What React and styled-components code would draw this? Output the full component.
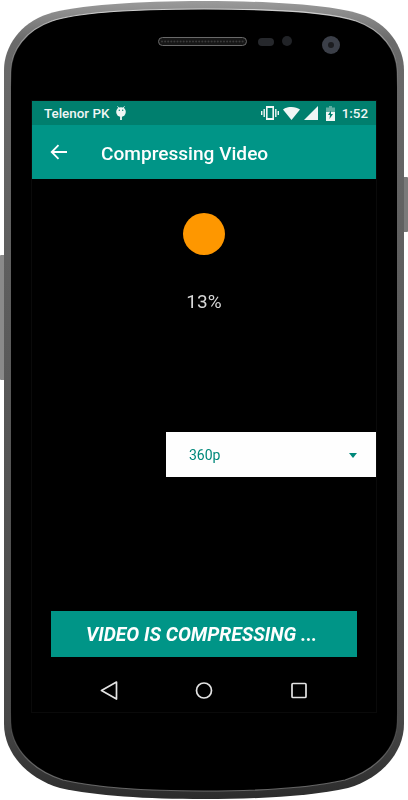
import React from "react";
import styled, { createGlobalStyle } from "styled-components";

const GlobalStyle = createGlobalStyle`
  html, body {
    margin: 0;
    padding: 0;
    background: #fff;
    font-family: Roboto, "Liberation Sans", sans-serif;
  }
`;

const Device = styled.div`
  position: relative;
  box-sizing: border-box;
  width: 408px;
  height: 800px;
  padding: 101px 32px 88px;
  overflow: hidden;
`;

const Shell = styled.svg`
  position: absolute;
  left: 0;
  top: 0;
`;

const Screen = styled.div`
  position: relative;
  display: flex;
  flex-direction: column;
  box-sizing: border-box;
  height: 611px;
  background: #000;
  box-shadow: 0 0 0 1px #0b0b0b;
  opacity: 0.999;
`;

const StatusBar = styled.div`
  display: flex;
  align-items: center;
  justify-content: space-between;
  height: 24px;
  padding: 0 8px 0 12px;
  background: #00806f;
  color: #f1f7f6;
  font-size: 13.4px;
  font-weight: 500;
`;

const StatusGroup = styled.div`
  display: flex;
  align-items: center;
  gap: ${(props) => props.$gap}px;
`;

const BatterySlot = styled.span`
  display: flex;
  margin: 0 3px 0 4px;
`;

const AppBar = styled.div`
  display: flex;
  align-items: center;
  height: 54px;
  padding-left: 18px;
  background: #009688;
  color: #fff;
`;

const Title = styled.h1`
  margin: 2px 0 0 33px;
  font-size: 19.1px;
  font-weight: 500;
`;

const Content = styled.div`
  display: flex;
  flex: 1;
  flex-direction: column;
  align-items: center;
  padding-top: 34px;
`;

const Dot = styled.div`
  width: 42px;
  height: 42px;
  border-radius: 50%;
  background: #ff9800;
`;

const Percent = styled.div`
  margin-top: 36px;
  color: #d8d8d8;
  font-size: 19px;
  line-height: 22px;
`;

const Dropdown = styled.div`
  display: flex;
  align-items: center;
  justify-content: space-between;
  align-self: flex-end;
  box-sizing: border-box;
  width: 210.5px;
  height: 45px;
  margin-top: 119px;
  padding: 0 19px 0 23.5px;
  background: #fff;
  color: #00897b;
  font-size: 14px;
`;

const Caret = styled.div`
  width: 0;
  height: 0;
  margin-top: 2px;
  border-left: 4.5px solid transparent;
  border-right: 4.5px solid transparent;
  border-top: 5px solid #00897b;
`;

const ActionButton = styled.button`
  display: block;
  box-sizing: border-box;
  width: 306px;
  height: 46px;
  margin-top: auto;
  padding: 0 0 0 35px;
  border: 0;
  background: #009688;
  color: #fff;
  font-family: inherit;
  font-size: 19.3px;
  font-style: italic;
  font-weight: 700;
  text-align: left;
`;

const NavBar = styled.div`
  display: flex;
  align-items: center;
  justify-content: center;
  gap: 75px;
  box-sizing: border-box;
  height: 55px;
  padding-top: 11px;
`;

const NavIcon = styled.svg`
  display: block;
  width: 20px;
  height: 20px;
`;

function DeviceShell() {
  const outer =
    "M204 1C270 1 332 5 360 14C388 23 404 47 404 70L404 724C404 752 382 778 348 788C312 796 262 799 204 799C146 799 96 796 60 788C26 778 4 752 4 724L4 70C4 47 20 23 48 14C76 5 138 1 204 1Z";
  const inner =
    "M204 9C270 9 330 12 356 21C382 30 397 50 397 72L397 722C397 748 376 770 345 780C310 788 262 791 204 791C146 791 98 788 63 780C32 770 11 748 11 722L11 72C11 50 26 30 52 21C78 12 138 9 204 9Z";
  const slots = Array.from({ length: 27 }, (_, i) => 162 + i * 3.1);

  return (
    <Shell width="408" height="800" viewBox="0 0 408 800">
      <defs>
        <linearGradient id="band" x1="0" y1="0" x2="0" y2="1">
          <stop offset="0" stopColor="#9a9a9a" />
          <stop offset="0.05" stopColor="#6a6a6a" />
          <stop offset="0.5" stopColor="#585858" />
          <stop offset="0.9" stopColor="#484848" />
          <stop offset="1" stopColor="#2c2c2c" />
        </linearGradient>
        <linearGradient id="ridge" x1="0" y1="0" x2="0" y2="1">
          <stop offset="0" stopColor="#e0e0e0" stopOpacity="0.9" />
          <stop offset="0.1" stopColor="#e0e0e0" stopOpacity="0" />
          <stop offset="0.9" stopColor="#9a9a9a" stopOpacity="0" />
          <stop offset="0.97" stopColor="#9a9a9a" stopOpacity="0.6" />
        </linearGradient>
      </defs>
      <rect x="0" y="255" width="6" height="125" rx="1" fill="#8a8a8a" />
      <rect x="402" y="177" width="6" height="55" rx="1" fill="#7a7a7a" />
      <path d={outer} fill="url(#band)" />
      <path d={inner} fill="#000" stroke="url(#ridge)" strokeWidth="1.2" />
      <rect x="158.5" y="37.5" width="88" height="8" rx="4" fill="#161616" stroke="#6a6a6a" />
      {slots.map((x) => (
        <circle key={x} cx={x} cy="41.5" r="1" fill="#3c3c3c" />
      ))}
      <rect x="258" y="38" width="16" height="8" rx="4" fill="#26282c" />
      <circle cx="287" cy="41" r="5" fill="#212327" />
      <circle cx="331" cy="45" r="9" fill="#3b3f48" />
      <circle cx="331" cy="45" r="3" fill="#1c1d20" />
    </Shell>
  );
}

function AndroidIcon() {
  return (
    <svg width="10" height="14" viewBox="0 0 10 14" fill="#f1f7f6">
      <path d="M1.500 .3l1.500 2M8.500 .3L7 2.300" stroke="#f1f7f6" strokeWidth=".9" />
      <circle cx="5" cy="6" r="4.800" />
      <rect x="4.100" y="10" width="1.800" height="4" />
      <circle cx="3.300" cy="4.300" r=".7" fill="#00806f" />
      <circle cx="6.700" cy="4.300" r=".7" fill="#00806f" />
    </svg>
  );
}

function VibrateIcon() {
  return (
    <svg width="18" height="14" viewBox="0 0 18 14" fill="#f1f7f6">
      <path d="M5 0h8v14H5zM6.600 2v10h4.800V2z" fillRule="evenodd" />
      <rect x="2.500" y="3" width="1.400" height="8" />
      <rect x="14.100" y="3" width="1.400" height="8" />
      <rect x="0" y="5" width="1.400" height="4" />
      <rect x="16.600" y="5" width="1.400" height="4" />
    </svg>
  );
}

function WifiIcon() {
  return (
    <svg width="17" height="13" viewBox="0 0 17 13" fill="#f1f7f6">
      <path d="M8.500 13L0 2.600C2.200 .9 5.200 0 8.500 0s6.300 .9 8.500 2.600z" />
    </svg>
  );
}

function SignalIcon() {
  return (
    <svg width="14" height="14" viewBox="0 0 14 14" fill="#f1f7f6">
      <path d="M0 14L14 0v14z" />
    </svg>
  );
}

function BatteryIcon() {
  return (
    <svg width="9" height="15" viewBox="0 0 9 15">
      <path d="M3 0h3v1.500h3V6H0V1.500h3z" fill="#f1f7f6" fillOpacity=".4" />
      <path d="M0 6h9v9H0z" fill="#f1f7f6" />
      <path d="M5 4.500L2 9h2l-.5 4L7 8H5z" fill="#00806f" />
    </svg>
  );
}

function BackArrow() {
  return (
    <svg width="18" height="16" viewBox="0 0 18 16" fill="none" stroke="#fff" strokeWidth="1.800">
      <path d="M17 8H2M8.500 1.200L1.700 8l6.800 6.800" />
    </svg>
  );
}

export default function App() {
  return (
    <>
      <GlobalStyle />
      <Device>
        <DeviceShell />
        <Screen>
          <StatusBar>
            <StatusGroup $gap={7}>
              <span>Telenor PK</span>
              <AndroidIcon />
            </StatusGroup>
            <StatusGroup $gap={4}>
              <VibrateIcon />
              <WifiIcon />
              <SignalIcon />
              <BatterySlot>
                <BatteryIcon />
              </BatterySlot>
              <span>1:52</span>
            </StatusGroup>
          </StatusBar>
          <AppBar>
            <BackArrow />
            <Title>Compressing Video</Title>
          </AppBar>
          <Content>
            <Dot />
            <Percent>13%</Percent>
            <Dropdown>
              <span>360p</span>
              <Caret />
            </Dropdown>
            <ActionButton>VIDEO IS COMPRESSING ...</ActionButton>
            <NavBar>
              <NavIcon viewBox="0 0 20 20" fill="none" stroke="#e4e4e4" strokeWidth="1.700" strokeLinejoin="round">
                <path d="M17.500 2L2.500 10.500l15 8.500z" />
              </NavIcon>
              <NavIcon viewBox="0 0 20 20" fill="none" stroke="#e4e4e4" strokeWidth="1.700">
                <circle cx="10" cy="10.500" r="7.500" />
              </NavIcon>
              <NavIcon viewBox="0 0 20 20" fill="none" stroke="#e4e4e4" strokeWidth="1.700" strokeLinejoin="round">
                <rect x="3" y="3.500" width="14" height="14" rx="1" />
              </NavIcon>
            </NavBar>
          </Content>
        </Screen>
      </Device>
    </>
  );
}
